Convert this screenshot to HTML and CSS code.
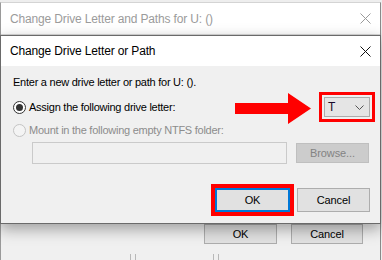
FILE: index.html
```html
<!DOCTYPE html>
<html>
<head>
<meta charset="utf-8">
<link rel="stylesheet" href="styles.css">
</head>
<body>
<div class="screen">
  <div class="outer">
    <div class="titlebar outer-title">
      <span class="title-text">Change Drive Letter and Paths for U: ()</span>
      <svg class="close" width="11" height="11" viewBox="0 0 11 11"><path d="M0.5 0.5 L10.5 10.5 M10.5 0.5 L0.5 10.5" stroke="#9a9a9a" stroke-width="1" fill="none"/></svg>
    </div>
    <div class="outer-body">
      <div class="outer-buttons">
        <div class="btn outer-btn">OK</div>
        <div class="btn outer-btn">Cancel</div>
      </div>
      <div class="outer-list">
        <span class="col c1"></span><span class="col c2"></span><span class="col c3"></span><span class="col c4"></span>
      </div>
    </div>
  </div>

  <div class="dialog">
    <div class="titlebar inner-title">
      <span class="title-text">Change Drive Letter or Path</span>
      <svg class="close" width="11" height="11" viewBox="0 0 11 11"><path d="M0.5 0.5 L10.5 10.5 M10.5 0.5 L0.5 10.5" stroke="#111" stroke-width="1" fill="none"/></svg>
    </div>
    <div class="dbody">
      <div class="intro">Enter a new drive letter or path for U: ().</div>
      <div class="row1">
        <div class="radio-line">
          <span class="radio checked"><span class="dot"></span></span>
          <span class="label">Assign the following drive letter:</span>
        </div>
        <div class="combo">
          <span class="combo-val">T</span>
          <svg width="9" height="5" viewBox="0 0 9 5"><path d="M0.5 0.5 L4.5 4.5 L8.5 0.5" stroke="#555" stroke-width="1" fill="none"/></svg>
          <span class="mark combo-mark"></span>
        </div>
      </div>
      <div class="row2">
        <span class="radio disabled"></span>
        <span class="label dis">Mount in the following empty NTFS folder:</span>
      </div>
      <div class="row3">
        <div class="textbox"></div>
        <div class="btn browse">Browse...</div>
      </div>
      <div class="row4">
        <div class="btn ok">OK<span class="mark ok-mark"></span></div>
        <div class="btn cancel">Cancel</div>
      </div>
    </div>
  </div>

  <svg class="arrow" width="77" height="31" viewBox="0 0 77 31">
    <polygon points="0,10 53,10 53,0 76,15.5 53,31 53,21 0,21" fill="#ff0000"/>
  </svg>
</div>
</body>
</html>
```

FILE: styles.css
```css
* { box-sizing: border-box; }
html, body { margin: 0; padding: 0; }
body {
  font-family: "Liberation Sans", Arial, sans-serif;
  font-size: 11px;
  color: #000;
  background: #f0f0f0;
}
.screen {
  position: relative;
  width: 382px;
  height: 260px;
  overflow: hidden;
  background: #eeeeee;
}
.outer {
  position: absolute;
  left: 0;
  top: 2px;
  width: 381px;
  height: 270px;
  border-top: 1px solid #d4d4d4;
  border-right: 1px solid #8a8a8a;
  border-left: 1px solid #9a9a9a;
  background: #f0f0f0;
}
.titlebar {
  display: flex;
  align-items: center;
  justify-content: space-between;
  background: #fff;
  padding: 0 9px 0 9px;
}
.title-text {
  font-size: 12px;
  letter-spacing: -0.15px;
}
.outer-title {
  height: 32px;
  border-bottom: 1px solid #d9d9d9;
  color: #9b9b9b;
}
.close { display: block; }
.outer-body {
  padding-top: 189px;
}
.outer-buttons {
  display: flex;
  justify-content: flex-end;
  gap: 14px;
  padding-right: 17px;
}
.btn {
  display: flex;
  align-items: center;
  justify-content: center;
  background: #e1e1e1;
  border: 1px solid #adadad;
  letter-spacing: -0.1px;
  font-size: 11px;
}
.outer-btn {
  width: 73px;
  height: 20px;
}
.outer-btn + .outer-btn { width: 72px; }
.outer-list {
  display: flex;
  margin-top: 10px;
  height: 10px;
}
.col { display: block; height: 10px; }
.c1 { width: 130px; border-right: 1px solid #b8b8b8; }
.c2 { width: 5px; border-right: 1px solid #b8b8b8; }
.c3 { width: 78px; border-right: 1px solid #b8b8b8; }
.c4 { width: 5px; border-right: 1px solid #b8b8b8; }

.dialog {
  position: absolute;
  left: 0;
  top: 35px;
  width: 381px;
  height: 189px;
  border: 1px solid #6a6a6a;
  background: #f0f0f0;
  box-shadow: 0 5px 14px rgba(0, 0, 0, 0.35);
}
.inner-title {
  height: 30px;
  color: #000;
}
.dbody {
  display: flex;
  flex-direction: column;
  padding: 9px 10px 0 12px;
  letter-spacing: -0.25px;
}
.intro {
  height: 15px;
  line-height: 15px;
}
.row1 {
  margin-top: 7px;
  height: 20px;
  display: flex;
  align-items: center;
  justify-content: space-between;
}
.radio-line {
  display: flex;
  align-items: center;
}
.radio {
  width: 13px;
  height: 13px;
  border-radius: 50%;
  border: 1px solid #333;
  background: #fff;
  display: flex;
  align-items: center;
  justify-content: center;
  flex: none;
}
.radio .dot {
  width: 7px;
  height: 7px;
  border-radius: 50%;
  background: #333;
}
.radio.disabled {
  border-color: #c4c4c4;
  background: #f4f4f4;
}
.label { margin-left: 3px; line-height: 15px; }
.label.dis { color: #8c8c8c; }
.combo {
  position: relative;
  width: 46px;
  height: 20px;
  background: #e5e5e5;
  border: 1px solid #acacac;
  display: flex;
  align-items: center;
  justify-content: space-between;
  padding: 0 5px 0 3px;
  font-size: 12px;
  letter-spacing: 0;
  color: #1a0a2a;
}
.combo svg { display: block; margin-top: 1px; }
.mark {
  position: absolute;
  border: 3px solid #ff0000;
  pointer-events: none;
}
.combo-mark {
  left: -6px;
  top: -6px;
  right: -6px;
  bottom: -6px;
}
.row2 {
  margin-top: 5px;
  height: 16px;
  display: flex;
  align-items: center;
}
.row3 {
  margin-top: 4px;
  height: 22px;
  display: flex;
  align-items: center;
  padding-left: 19px;
}
.textbox {
  width: 255px;
  height: 22px;
  background: #f0f0f0;
  border: 1px solid #cacaca;
}
.browse {
  margin-left: 9px;
  width: 73px;
  height: 20px;
  background: #cccccc;
  border-color: #bfbfbf;
  color: #838383;
}
.row4 {
  margin-top: 24px;
  display: flex;
  justify-content: flex-end;
  gap: 7px;
}
.ok {
  position: relative;
  width: 75px;
  height: 24px;
  border: 2px solid #0078d7;
}
.ok-mark {
  left: -6px;
  top: -6px;
  right: -6px;
  bottom: -6px;
  border-width: 4px;
}
.cancel {
  width: 73px;
  height: 24px;
}
.arrow {
  position: absolute;
  left: 235px;
  top: 93px;
  display: block;
}
```
